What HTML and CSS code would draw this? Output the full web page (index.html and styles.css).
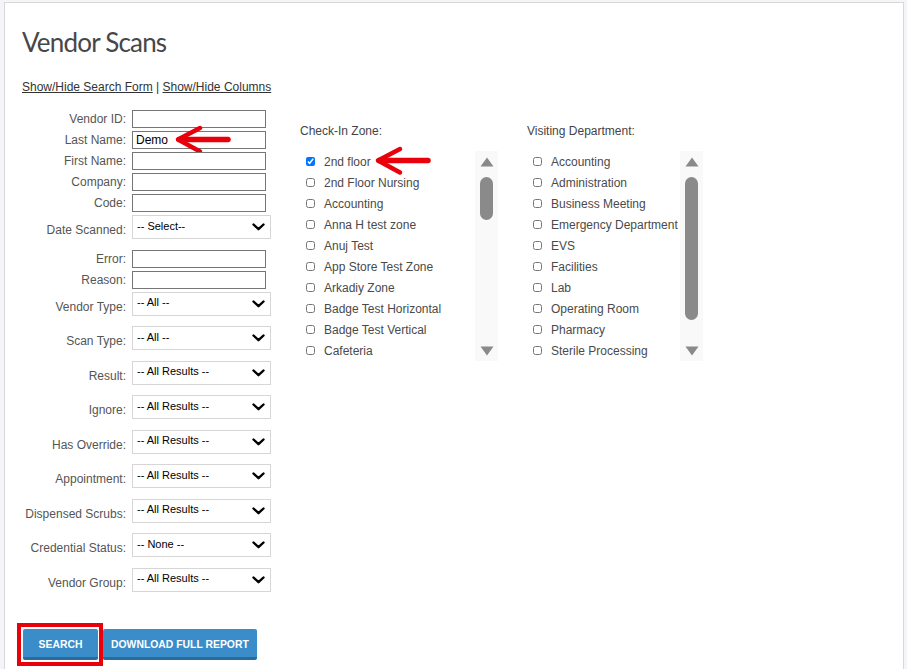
FILE: index.html
```html
<!DOCTYPE html>
<html lang="en">
<head>
<meta charset="utf-8">
<title>Vendor Scans</title>
<link rel="stylesheet" href="styles.css">
</head>
<body>
<div class="card">
  <h1 class="title">Vendor Scans</h1>
  <p class="toggles"><a href="#">Show/Hide Search Form</a> | <a href="#">Show/Hide Columns</a></p>

  <form class="search">
    <div class="fields">
      <div class="row"><label class="row-label">Vendor ID:</label><input class="text-input" type="text"></div>
      <div class="row row-marked"><label class="row-label">Last Name:</label><input class="text-input" type="text" value="Demo">
        <svg class="pointer pointer-name" viewBox="0 0 60 32" width="60" height="32"><path d="M6 15.5H55" class="shaft"/><path d="M27 4L5 15.5L27 27.5" class="head"/></svg>
      </div>
      <div class="row"><label class="row-label">First Name:</label><input class="text-input" type="text"></div>
      <div class="row"><label class="row-label">Company:</label><input class="text-input" type="text"></div>
      <div class="row"><label class="row-label">Code:</label><input class="text-input" type="text"></div>
      <div class="row row-select"><label class="row-label">Date Scanned:</label><span class="select-wrap"><select class="select"><option>-- Select--</option></select><svg class="chevron" viewBox="0 0 13 8"><path d="M1.5 1.5L6.5 6.2L11.5 1.5"/></svg></span></div>
      <div class="row"><label class="row-label">Error:</label><input class="text-input" type="text"></div>
      <div class="row"><label class="row-label">Reason:</label><input class="text-input" type="text"></div>
      <div class="row row-select"><label class="row-label">Vendor Type:</label><span class="select-wrap"><select class="select"><option>-- All --</option></select><svg class="chevron" viewBox="0 0 13 8"><path d="M1.5 1.5L6.5 6.2L11.5 1.5"/></svg></span></div>
      <div class="row row-select"><label class="row-label">Scan Type:</label><span class="select-wrap"><select class="select"><option>-- All --</option></select><svg class="chevron" viewBox="0 0 13 8"><path d="M1.5 1.5L6.5 6.2L11.5 1.5"/></svg></span></div>
      <div class="row row-select"><label class="row-label">Result:</label><span class="select-wrap"><select class="select"><option>-- All Results --</option></select><svg class="chevron" viewBox="0 0 13 8"><path d="M1.5 1.5L6.5 6.2L11.5 1.5"/></svg></span></div>
      <div class="row row-select"><label class="row-label">Ignore:</label><span class="select-wrap"><select class="select"><option>-- All Results --</option></select><svg class="chevron" viewBox="0 0 13 8"><path d="M1.5 1.5L6.5 6.2L11.5 1.5"/></svg></span></div>
      <div class="row row-select"><label class="row-label">Has Override:</label><span class="select-wrap"><select class="select"><option>-- All Results --</option></select><svg class="chevron" viewBox="0 0 13 8"><path d="M1.5 1.5L6.5 6.2L11.5 1.5"/></svg></span></div>
      <div class="row row-select"><label class="row-label">Appointment:</label><span class="select-wrap"><select class="select"><option>-- All Results --</option></select><svg class="chevron" viewBox="0 0 13 8"><path d="M1.5 1.5L6.5 6.2L11.5 1.5"/></svg></span></div>
      <div class="row row-select"><label class="row-label">Dispensed Scrubs:</label><span class="select-wrap"><select class="select"><option>-- All Results --</option></select><svg class="chevron" viewBox="0 0 13 8"><path d="M1.5 1.5L6.5 6.2L11.5 1.5"/></svg></span></div>
      <div class="row row-select"><label class="row-label">Credential Status:</label><span class="select-wrap"><select class="select"><option>-- None --</option></select><svg class="chevron" viewBox="0 0 13 8"><path d="M1.5 1.5L6.5 6.2L11.5 1.5"/></svg></span></div>
      <div class="row row-select"><label class="row-label">Vendor Group:</label><span class="select-wrap"><select class="select"><option>-- All Results --</option></select><svg class="chevron" viewBox="0 0 13 8"><path d="M1.5 1.5L6.5 6.2L11.5 1.5"/></svg></span></div>
    </div>

    <div class="zone zone-checkin">
      <div class="zone-label">Check-In Zone:</div>
      <div class="checklist">
        <ul class="items">
          <li class="item"><input type="checkbox" checked><span>2nd floor</span>
            <svg class="pointer pointer-zone" viewBox="0 0 60 32" width="60" height="32"><path d="M6 15.5H55" class="shaft"/><path d="M27 4L5 15.5L27 27.5" class="head"/></svg>
          </li>
          <li class="item"><input type="checkbox"><span>2nd Floor Nursing</span></li>
          <li class="item"><input type="checkbox"><span>Accounting</span></li>
          <li class="item"><input type="checkbox"><span>Anna H test zone</span></li>
          <li class="item"><input type="checkbox"><span>Anuj Test</span></li>
          <li class="item"><input type="checkbox"><span>App Store Test Zone</span></li>
          <li class="item"><input type="checkbox"><span>Arkadiy Zone</span></li>
          <li class="item"><input type="checkbox"><span>Badge Test Horizontal</span></li>
          <li class="item"><input type="checkbox"><span>Badge Test Vertical</span></li>
          <li class="item"><input type="checkbox"><span>Cafeteria</span></li>
        </ul>
        <div class="scrollbar">
          <svg class="step" viewBox="0 0 14 10"><path d="M7 0.5L13.5 9.5H0.5Z"/></svg>
          <div class="thumb thumb-short"></div>
          <svg class="step step-down" viewBox="0 0 14 10"><path d="M7 9.5L13.5 0.5H0.5Z"/></svg>
        </div>
      </div>
    </div>

    <div class="zone zone-dept">
      <div class="zone-label">Visiting Department:</div>
      <div class="checklist">
        <ul class="items">
          <li class="item"><input type="checkbox"><span>Accounting</span></li>
          <li class="item"><input type="checkbox"><span>Administration</span></li>
          <li class="item"><input type="checkbox"><span>Business Meeting</span></li>
          <li class="item"><input type="checkbox"><span>Emergency Department</span></li>
          <li class="item"><input type="checkbox"><span>EVS</span></li>
          <li class="item"><input type="checkbox"><span>Facilities</span></li>
          <li class="item"><input type="checkbox"><span>Lab</span></li>
          <li class="item"><input type="checkbox"><span>Operating Room</span></li>
          <li class="item"><input type="checkbox"><span>Pharmacy</span></li>
          <li class="item"><input type="checkbox"><span>Sterile Processing</span></li>
        </ul>
        <div class="scrollbar">
          <svg class="step" viewBox="0 0 14 10"><path d="M7 0.5L13.5 9.5H0.5Z"/></svg>
          <div class="thumb thumb-long"></div>
          <svg class="step step-down" viewBox="0 0 14 10"><path d="M7 9.5L13.5 0.5H0.5Z"/></svg>
        </div>
      </div>
    </div>
  </form>

  <div class="actions">
    <span class="marked"><button class="btn btn-search" type="button">Search</button></span>
    <button class="btn" type="button">Download Full Report</button>
  </div>
</div>
</body>
</html>
```

FILE: styles.css
```css
html {
  overflow: hidden;
}

body {
  margin: 0;
  padding: 2px 3px 0 4px;
  background: #f4f5f8;
  font-family: "Liberation Sans", Arial, sans-serif;
}

.card {
  position: relative;
  min-height: 700px;
  padding: 23px 17px 40px;
  background: #fff;
  border: 1px solid #d8d8d8;
}

.title {
  margin: 0;
  font: 400 26px/32px Lato, "Open Sans", sans-serif;
  letter-spacing: -0.8px;
  color: #474747;
}

.toggles {
  margin: 22px 0 16px;
  font-size: 12px;
  line-height: 14px;
  color: #333;
}

.toggles a {
  color: #333;
  text-decoration: underline;
}

/* search form: field table + two checklists */
.search {
  display: flex;
  align-items: flex-start;
}

.fields {
  width: 249px;
  margin-right: 29px;
}

.row {
  position: relative;
  display: flex;
  align-items: flex-start;
  height: 21px;
}

.row-label {
  width: 104px;
  margin-right: 6px;
  flex: none;
  text-align: right;
  white-space: nowrap;
  font-size: 12px;
  line-height: 18px;
  color: #555;
}

.text-input {
  width: 134px;
  height: 18px;
  margin: 0;
  padding: 0 3px;
  box-sizing: border-box;
  border: 1px solid #767676;
  border-radius: 0;
  font: 12px "Liberation Sans", Arial, sans-serif;
  color: #000;
}

.row-select {
  height: 24px;
  margin-bottom: 10.5px;
  align-items: center;
}

.row-select .row-label {
  padding-top: 6px;
  line-height: 14px;
}

.select-wrap {
  position: relative;
  width: 139px;
  height: 24px;
}

.select {
  appearance: none;
  -webkit-appearance: none;
  width: 100%;
  height: 24px;
  margin: 0;
  padding: 0 22px 3px 4px;
  box-sizing: border-box;
  border: 1px solid #d6d6d6;
  border-radius: 0;
  background: #fff;
  font: 11px "Liberation Sans", Arial, sans-serif;
  color: #000;
}

.chevron {
  position: absolute;
  right: 6px;
  top: 8px;
  width: 13px;
  height: 8px;
  pointer-events: none;
}

.chevron path {
  fill: none;
  stroke: #000;
  stroke-width: 2.4;
  stroke-linecap: round;
  stroke-linejoin: round;
}

/* checklists */
.zone {
  display: flex;
  flex-direction: column;
  padding-top: 13.5px;
}

.zone-checkin {
  width: 198px;
  margin-right: 29px;
}

.zone-dept {
  width: 176px;
}

.zone-label {
  margin-bottom: 13.5px;
  font-size: 12px;
  line-height: 14px;
  color: #444;
}

.checklist {
  display: flex;
  height: 210px;
}

.items {
  flex: 1;
  margin: 0;
  padding: 0;
  list-style: none;
}

.item {
  position: relative;
  display: flex;
  align-items: center;
  height: 21px;
  font-size: 12px;
  color: #4a4a4a;
  white-space: nowrap;
}

.item input {
  width: 9px;
  height: 9px;
  margin: 0 9px 0 6px;
  flex: none;
}

.scrollbar {
  width: 23px;
  flex: none;
  display: flex;
  flex-direction: column;
  align-items: center;
  padding: 6px 0 5px;
  box-sizing: border-box;
  background: #f9f9f9;
}

.step {
  width: 14px;
  height: 10px;
  flex: none;
}

.step path {
  fill: #8a8a8a;
}

.step-down {
  margin-top: auto;
}

.thumb {
  width: 13px;
  margin-top: 10px;
  border-radius: 7px;
  background: #8a8a8a;
}

.thumb-short {
  height: 43px;
}

.thumb-long {
  height: 143px;
}

/* red annotation arrows */
.pointer {
  position: absolute;
  overflow: visible;
}

.pointer path {
  fill: none;
  stroke: #e8000b;
  stroke-linecap: round;
  stroke-linejoin: round;
}

.pointer .shaft {
  stroke-width: 5.5;
}

.pointer .head {
  stroke-width: 4.5;
}

.pointer-name {
  left: 151px;
  top: -7px;
}

.pointer-zone {
  left: 73px;
  top: -6.5px;
}

/* buttons */
.actions {
  display: flex;
  gap: 5px;
  margin-top: 26.5px;
  padding-left: 1px;
}

.marked {
  position: relative;
  display: flex;
}

/* red highlight frame around the search button */
.marked::after {
  content: "";
  position: absolute;
  top: -6px;
  right: -5px;
  bottom: -6px;
  left: -6px;
  border: 4px solid #e8000b;
  pointer-events: none;
}

.btn {
  height: 31px;
  padding: 3px 8px 0;
  box-sizing: border-box;
  border: 0;
  border-bottom: 3px solid #2a6b9a;
  border-radius: 2px;
  background: #3a8dc8;
  color: #fff;
  font: 700 10.4px "Liberation Sans", Arial, sans-serif;
  text-transform: uppercase;
}

.btn-search {
  min-width: 75px;
}
```
